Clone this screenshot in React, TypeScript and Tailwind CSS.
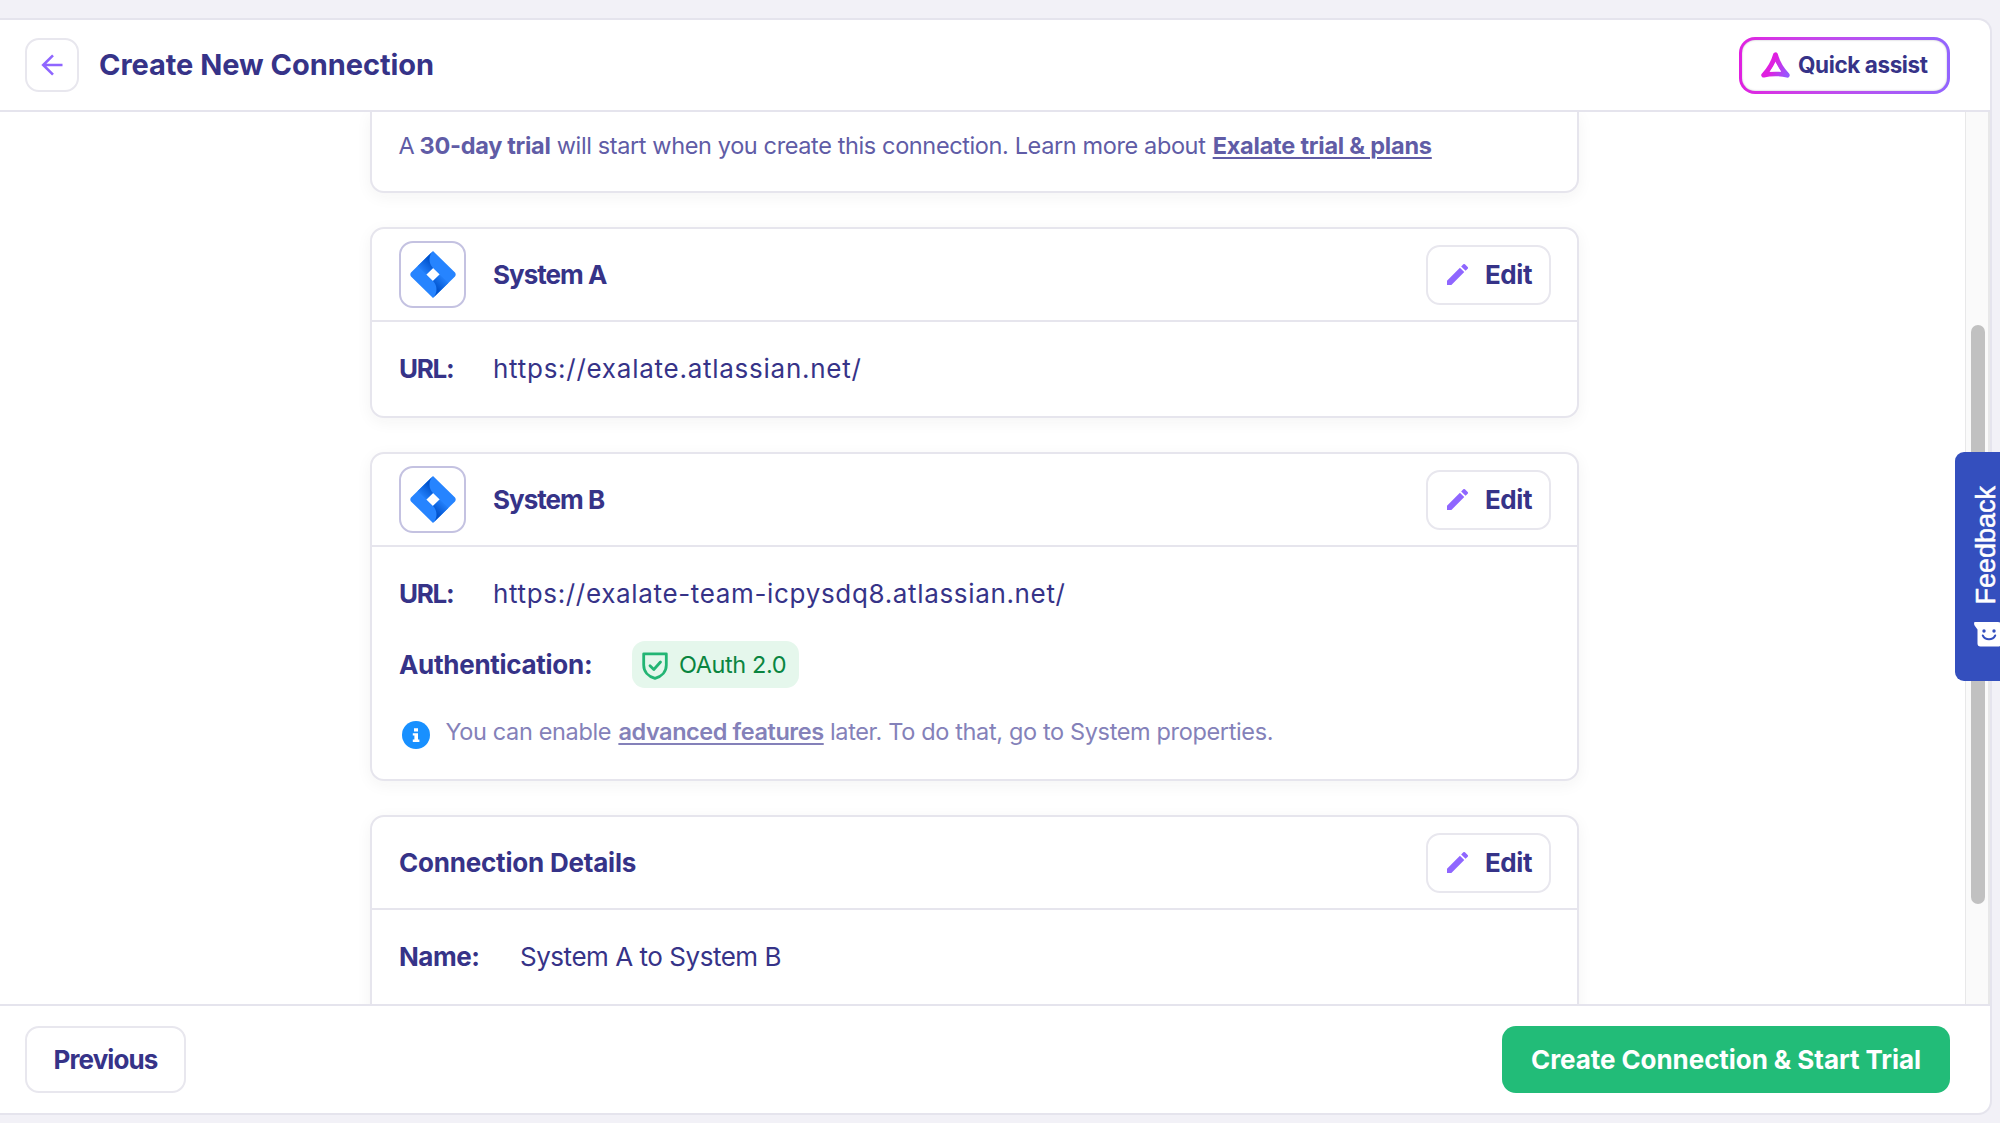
import type { ReactNode } from 'react';

function JiraLogo({ id }: { id: string }) {
  return (
    <svg viewBox="0 0 46 47" className="h-[47px] w-[46px]" aria-hidden="true">
      <defs>
        <linearGradient id={`${id}-top`} x1="21" y1="8" x2="9" y2="20" gradientUnits="userSpaceOnUse">
          <stop offset="0.1" stopColor="#0052cc" />
          <stop offset="0.95" stopColor="#2684ff" />
        </linearGradient>
        <linearGradient id={`${id}-bottom`} x1="25" y1="39" x2="37" y2="27" gradientUnits="userSpaceOnUse">
          <stop offset="0.1" stopColor="#0052cc" />
          <stop offset="0.95" stopColor="#2684ff" />
        </linearGradient>
      </defs>
      <path fill="#2684ff" fillRule="evenodd" d="M23 0 45 21.6q1.4 1.9 0 3.8L23 47 1 25.4q-1.4-1.9 0-3.8ZM23 16.9 16.3 23.5 23 30.1 29.7 23.5Z" />
      <path fill={`url(#${id}-top)`} d="M23 16.9C18.6 12.5 18.3 5.500 22.300 .7L7.500 15.200 16.300 23.500Z" />
      <path fill={`url(#${id}-bottom)`} d="M29.700 23.500 23 30.100C27.400 34.500 27.700 41.500 23.700 46.300L38.500 31.800Z" />
    </svg>
  );
}

function EditButton() {
  return (
    <button className="flex h-[60px] w-[125px] items-center rounded-[14px] border-2 border-[#e8e7ee] bg-white pl-[19px]">
      <svg viewBox="3 3 18 18" className="mr-[17px] h-[21px] w-[21px] shrink-0 fill-[#8f66ff]" aria-hidden="true">
        <path d="M3 17.250V21h3.750L17.810 9.940l-3.750-3.750L3 17.250ZM20.710 7.040a1 1 0 0 0 0-1.410l-2.340-2.340a1 1 0 0 0-1.410 0l-1.830 1.830 3.750 3.750 1.830-1.830Z" />
      </svg>
      <span className="text-[26px] leading-8 font-bold tracking-[-0.44px]">Edit</span>
    </button>
  );
}

function Card({ header, children, className }: { header: ReactNode; children: ReactNode; className: string }) {
  return (
    <section className={`${className} shrink-0 rounded-[14px] border-2 border-[#e6e5ed] bg-white shadow-[0_4px_16px_rgba(30,30,40,0.05)]`}>
      <div className="flex h-[93px] items-center border-b-2 border-[#e6e5ed] pr-[26px] pl-[27px]">
        {header}
        <div className="ml-auto">
          <EditButton />
        </div>
      </div>
      {children}
    </section>
  );
}

function SystemHeader({ id, name, tracking }: { id: string; name: string; tracking: string }) {
  return (
    <>
      <div className="flex h-[67px] w-[67px] items-center justify-center rounded-[14px] border-2 border-[#c4c2e1]">
        <JiraLogo id={id} />
      </div>
      <h2 className={`ml-[27px] text-[26px] leading-8 font-bold ${tracking}`}>{name}</h2>
    </>
  );
}

export default function App() {
  return (
    <div className="relative flex h-[1123px] w-[2000px] overflow-hidden bg-[#f2f1f7] pt-[18px] pb-2 font-['Inter','Liberation_Sans',sans-serif] text-[#363388]">
      <div className="flex w-[1992px] flex-col overflow-hidden rounded-r-[14px] border-y-2 border-r-2 border-[#e5e4ed] bg-white">
        <header className="flex h-[92px] shrink-0 items-center border-b-2 border-[#e5e4ed] pr-10 pl-[25px]">
          <button className="flex h-[54px] w-[54px] items-center justify-center rounded-[14px] border-2 border-[#e8e7ee]">
            <svg viewBox="0 0 22 22" className="h-[22px] w-[22px] fill-none stroke-[#8f66ff] stroke-[2.6]" aria-hidden="true">
              <path d="M21.500 11H2.500M12 1.300 2.200 11l9.800 9.700" />
            </svg>
          </button>
          <h1 className="ml-5 text-[29px] leading-9 font-bold tracking-[-0.04px]">Create New Connection</h1>
          <div className="ml-auto h-[57px] w-[211px] rounded-[16px] bg-gradient-to-r from-[#e01fe0] to-[#9264ff] p-[3px]">
            <button className="flex h-full w-full items-center rounded-[13px] bg-white pl-[19px] shadow-[inset_0_0_2px_rgba(40,40,60,0.35)]">
              <svg viewBox="0 0 29 26" className="h-[26px] w-[29px] shrink-0" aria-hidden="true">
                <defs>
                  <linearGradient id="assist" x1="2" y1="12" x2="27" y2="22" gradientUnits="userSpaceOnUse">
                    <stop offset="0.35" stopColor="#df20e0" />
                    <stop offset="1" stopColor="#9458ff" />
                  </linearGradient>
                </defs>
                <path d="M14.500 2.700C12.500 10 8 17.500 2.700 23.200 9 21.300 20 21.300 26.300 23.200 21 17.500 16.500 10 14.500 2.700Z" fill="none" stroke="url(#assist)" strokeWidth="4.800" strokeLinejoin="round" />
                <path d="M14.500 10.800 9.500 19.500h10Z" fill="white" />
              </svg>
              <span className="ml-2 text-[22.500px] leading-8 font-bold tracking-[-0.4px] whitespace-nowrap">Quick assist</span>
            </button>
          </div>
        </header>

        <div className="flex h-[892px] shrink-0 overflow-hidden">
          <main className="flex w-[1965px] flex-col gap-[34px] pl-[370px]">
            <section className="h-[81px] w-[1209px] shrink-0 rounded-b-[14px] border-2 border-t-0 border-[#e6e5ed] bg-white pl-[26.500px] shadow-[0_4px_16px_rgba(30,30,40,0.05)]">
              <p className="pt-[18px] text-[23.500px] leading-8 tracking-[-0.38px] whitespace-nowrap text-[#605ca6]">
                A <b className="-ml-px tracking-[-0.3px]">30-day trial</b> will start when you create this connection. Learn more about{' '}
                <a className="ml-px font-bold tracking-[-0.22px] underline decoration-2 underline-offset-[3px]">Exalate trial &amp; plans</a>
              </p>
            </section>

            <Card className="h-[191px] w-[1209px]" header={<SystemHeader id="jira-a" name="System A" tracking="tracking-[-1px]" />}>
              <div className="flex h-[94px] items-center pl-[27px] text-[26px] leading-8">
                <span className="w-[94px] font-bold tracking-[-1.300px]">URL:</span>
                <span className="tracking-[0.74px]">https://exalate.atlassian.net/</span>
              </div>
            </Card>

            <Card className="h-[329px] w-[1209px]" header={<SystemHeader id="jira-b" name="System B" tracking="tracking-[-1px]" />}>
              <div className="flex h-[94px] items-center pl-[27px] text-[26px] leading-8">
                <span className="w-[94px] font-bold tracking-[-1.300px]">URL:</span>
                <span className="tracking-[0.66px]">https://exalate-team-icpysdq8.atlassian.net/</span>
              </div>
              <div className="flex h-[47px] items-center pl-[27px]">
                <span className="w-[233px] text-[26px] leading-8 font-bold tracking-[-0.29px]">Authentication:</span>
                <span className="flex h-[47px] w-[167px] items-center rounded-[13px] bg-[#e5f7ec] pl-[10px]">
                  <svg viewBox="0 0 26 28" className="mt-0.5 h-7 w-[26px] fill-none stroke-[#23b574] stroke-[2.8]" strokeLinejoin="round" strokeLinecap="round" aria-hidden="true">
                    <path d="M1.700 1.800H24.300V13C24.300 19.500 20 24.500 13 26.400 6 24.500 1.700 19.500 1.700 13ZM8 13.800l3.800 3.700L18.500 10" />
                  </svg>
                  <span className="ml-[11px] text-[23.500px] leading-8 tracking-[-0.4px] whitespace-nowrap text-[#0a8540]">OAuth 2.0</span>
                </span>
              </div>
              <div className="flex pt-[28px] pl-[29.500px]">
                <svg viewBox="0 0 28 28" className="mt-[5px] h-7 w-7" aria-hidden="true">
                  <circle cx="14" cy="14" r="14" fill="#1890ff" />
                  <path fill="white" d="M12 7.200h4v3.200h-4ZM10.800 12.200H16v6.400h1.400v2.400h-6.600v-2.400h1.600v-4h-1.600Z" />
                </svg>
                <p className="ml-4 text-[23.500px] leading-8 tracking-[-0.36px] whitespace-nowrap text-[#8481b9]">
                  You can enable <a className="ml-px font-semibold tracking-[-0.42px] underline decoration-2 underline-offset-[3px]">advanced features</a> later. To do that, go to System properties.
                </p>
              </div>
            </Card>

            <Card
              className="h-[240px] w-[1209px]"
              header={<h2 className="text-[26px] leading-8 font-bold tracking-[-0.21px]">Connection Details</h2>}
            >
              <div className="flex h-[94px] items-center pl-[27px] text-[26px] leading-8">
                <span className="w-[121px] font-bold tracking-[-0.500px]">Name:</span>
                <span className="tracking-[-0.47px]">System A to System B</span>
              </div>
            </Card>
          </main>
          <div className="w-[25px] border-r-2 border-l border-[#e8e8e9] bg-[#fafafa] pt-[213px]">
            <div className="mr-[3px] ml-auto h-[579px] w-[14px] rounded-full bg-[#c1c1c1]" />
          </div>
        </div>

        <footer className="flex flex-1 items-center justify-between border-t-2 border-[#e5e4ed] pr-10 pl-[25px]">
          <button className="h-[67px] w-[161px] rounded-[14px] border-2 border-[#e8e7ee] text-[26px] leading-8 font-bold tracking-[-0.89px]">
            Previous
          </button>
          <button className="h-[67px] w-[448px] rounded-[14px] bg-[#22bc78] text-[26px] leading-8 font-bold tracking-[-0.07px] whitespace-nowrap text-white">
            Create Connection &amp; Start Trial
          </button>
        </footer>
      </div>

      <aside className="absolute top-[452px] right-0 flex h-[229px] w-[45px] flex-col items-start rounded-l-[9px] bg-[#344fbe] pt-[34px] pl-[18px] text-white">
        <span className="rotate-180 font-['Liberation_Sans',sans-serif] text-[27px] leading-[27px] [-webkit-text-stroke:0.5px_white] [writing-mode:vertical-rl]">
          Feedback
        </span>
        <svg viewBox="0 0 28 25" className="mt-[17px] ml-px h-[25px] w-7 shrink-0" aria-hidden="true">
          <path fill="white" d="M.8 0H24a3 3 0 0 1 3 3v18.500a3 3 0 0 1-3 3H6.500a3 3 0 0 1-3-3V7.500L.6 3.400C-.3 2 .1 0 .8 0Z" />
          <circle cx="10" cy="9" r="1.700" fill="#344fbe" />
          <circle cx="20" cy="9" r="1.700" fill="#344fbe" />
          <path d="M8.800 13.500c2.500 5 9.900 5 12.400 0" fill="none" stroke="#344fbe" strokeWidth="2" strokeLinecap="round" />
        </svg>
      </aside>
    </div>
  );
}
